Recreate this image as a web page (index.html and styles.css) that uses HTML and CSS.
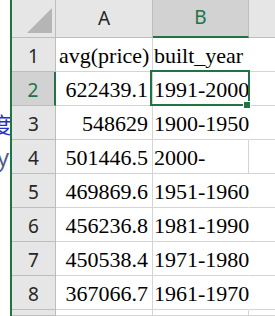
FILE: index.html
```html
<!DOCTYPE html>
<html>
<head>
<meta charset="utf-8">
<link rel="stylesheet" href="styles.css">
</head>
<body>
<div class="app">
  <div class="strip">
    <span class="frag-du">度</span>
    <span class="frag-y">y</span>
  </div>
  <div class="edge"></div>
  <div class="sheet">
    <div class="corner"><svg width="25" height="25" viewBox="0 0 25 25"><polygon points="25,0 25,25 0,25" fill="#b5b5b5"/></svg></div>
    <div class="ch">A</div>
    <div class="ch sel">B</div>
    <div class="ch last"></div>

    <div class="rh">1</div>
    <div class="cell left">avg(price)</div>
    <div class="cell b over">built_year</div>
    <div class="cell c"></div>

    <div class="rh sel">2</div>
    <div class="cell num">622439.1</div>
    <div class="cell b over active">1991-2000</div>
    <div class="cell c"></div>

    <div class="rh">3</div>
    <div class="cell num">548629</div>
    <div class="cell b over">1900-1950</div>
    <div class="cell c"></div>

    <div class="rh">4</div>
    <div class="cell num">501446.5</div>
    <div class="cell b">2000-</div>
    <div class="cell c"></div>

    <div class="rh">5</div>
    <div class="cell num">469869.6</div>
    <div class="cell b over">1951-1960</div>
    <div class="cell c"></div>

    <div class="rh">6</div>
    <div class="cell num">456236.8</div>
    <div class="cell b over">1981-1990</div>
    <div class="cell c"></div>

    <div class="rh">7</div>
    <div class="cell num">450538.4</div>
    <div class="cell b over">1971-1980</div>
    <div class="cell c"></div>

    <div class="rh">8</div>
    <div class="cell num">367066.7</div>
    <div class="cell b over">1961-1970</div>
    <div class="cell c"></div>

    <div class="rh"></div>
    <div class="cell"></div>
    <div class="cell b"></div>
    <div class="cell c"></div>
  </div>
</div>
</body>
</html>
```
FILE: styles.css
```css
html, body {
  margin: 0;
  padding: 0;
  background: #fff;
}
body {
  width: 275px;
  height: 316px;
  overflow: hidden;
}
.app {
  display: flex;
  height: 316px;
}
.strip {
  width: 10px;
  overflow: hidden;
  display: flex;
  flex-direction: column;
  align-items: flex-end;
  padding-top: 110px;
  box-sizing: border-box;
}
.frag-du {
  font-family: "Noto Sans CJK TC", sans-serif;
  font-size: 22px;
  line-height: 26px;
  color: #2c2cc8;
  margin-right: -2px;
  white-space: nowrap;
}
.frag-y {
  font-family: "Open Sans", sans-serif;
  font-size: 24px;
  line-height: 34px;
  color: #4b5c8c;
  margin-right: 1px;
  margin-top: 4px;
}
.edge {
  width: 2px;
  background: #217346;
  flex: none;
}
.sheet {
  flex: 1;
  display: grid;
  grid-template-columns: 44px 97px 96px 1fr;
  grid-template-rows: 38px repeat(8, 34px) 1fr;
}
.sheet > div {
  box-sizing: border-box;
  border-right: 1px solid #d4d4d4;
  border-bottom: 1px solid #d4d4d4;
  min-width: 0;
}
.corner {
  background: #e6e6e6;
  border-right-color: #bdbdbd !important;
  border-bottom-color: #bdbdbd !important;
  display: flex;
  justify-content: flex-end;
  align-items: flex-end;
  padding: 0 3px 4px 0;
}
.corner svg { display: block; }
.ch {
  background: #e6e6e6;
  border-right-color: #bdbdbd !important;
  border-bottom-color: #bdbdbd !important;
  font-family: "Noto Sans", sans-serif;
  font-size: 19px;
  color: #262626;
  display: flex;
  justify-content: center;
  align-items: center;
  padding-bottom: 2px;
}
.ch.sel {
  background: #d2d2d2;
  color: #217346;
  border-bottom: 2px solid #217346 !important;
}
.ch.last { border-right: none; }
.rh {
  background: #e6e6e6;
  border-right-color: #bdbdbd !important;
  border-bottom-color: #bdbdbd !important;
  font-family: "Noto Sans", sans-serif;
  font-size: 19px;
  color: #262626;
  display: flex;
  justify-content: center;
  align-items: center;
  padding-top: 3px;
}
.rh.sel {
  background: #d2d2d2;
  color: #217346;
  border-right: 2px solid #217346 !important;
}
.cell {
  font-family: "Liberation Serif", serif;
  font-size: 22px;
  line-height: 30px;
  padding-top: 3px;
  color: #000;
  white-space: nowrap;
  position: relative;
}
.cell.left { padding-left: 3px; }
.cell.num { text-align: right; padding-right: 4px; }
.cell.b { padding-left: 1px; }
.cell.over { border-right-color: transparent; }
.cell.c { border-right: none; }
.cell.active::after {
  content: "";
  position: absolute;
  left: -3px;
  top: -2px;
  right: -2px;
  bottom: -1px;
  border: 2px solid #217346;
}
.cell.active::before {
  content: "";
  position: absolute;
  right: -3px;
  bottom: -4px;
  width: 6px;
  height: 6px;
  background: #217346;
  border: 1px solid #fff;
  z-index: 1;
}
```
